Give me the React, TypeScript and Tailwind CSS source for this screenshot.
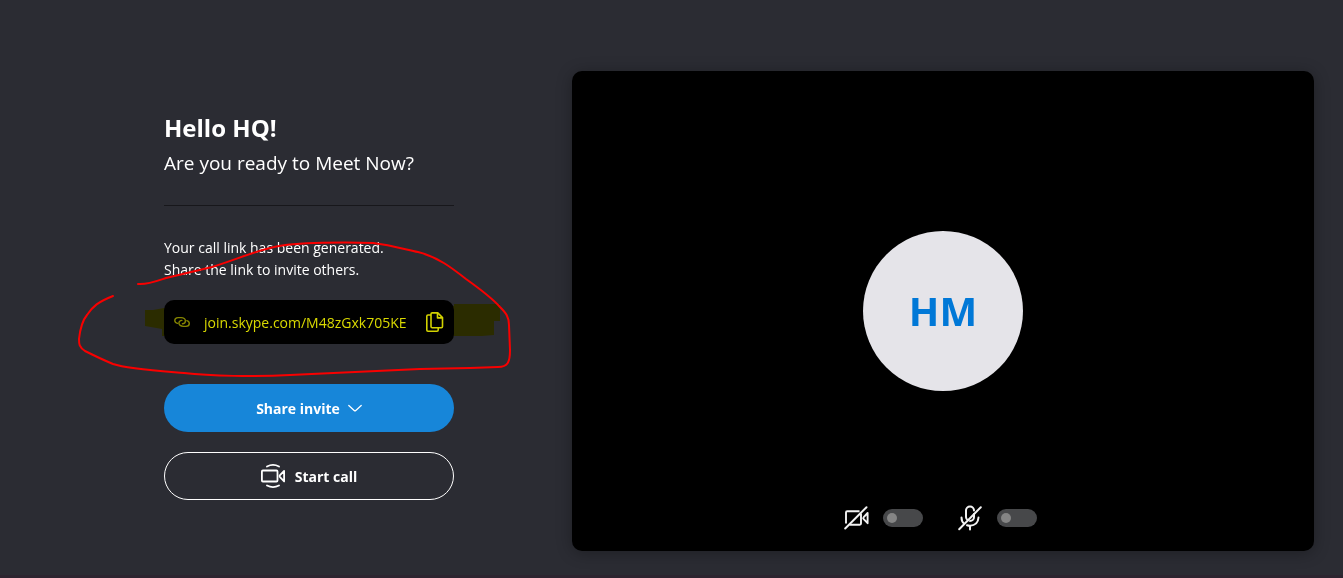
import React, { useState } from 'react';

const callLink = 'join.skype.com/M48zGxk705KE';

const LinkIcon = () => (
  <svg className="h-4 w-4" viewBox="0 0 16 16" fill="none" stroke="currentColor" strokeWidth="1.4" strokeLinecap="round">
    <path d="M3.600 9.400C1.800 9 .8 7.800.8 6.500c0-1.800 1.400-2.900 3.400-2.900h3c2.300 0 4.200 1.500 4.200 3.400 0 1.600-1.200 2.700-3 2.700" />
    <path d="M12.800 6.700c1.600.5 2.500 1.700 2.500 2.900 0 1.700-1.400 2.800-3.300 2.800H9.200c-2.400 0-4.300-1.500-4.300-3.300 0-1.600 1.200-2.700 3-2.700" />
  </svg>
);

const CopyIcon = () => (
  <svg className="h-5 w-[18px]" viewBox="0 0 18 20" fill="none" stroke="currentColor" strokeWidth="1.6" strokeLinejoin="round">
    <path d="M6.200.9h5.600l4.700 4.700v9q0 1.200-1.200 1.200H6.200Q5 15.800 5 14.600V2.100Q5 .9 6.200.9z" />
    <path d="M11.500.9v5h5" />
    <path d="M5 3H2Q.8 3 .8 4.200v13.800q0 1.200 1.200 1.200h9q1.200 0 1.200-1.200v-2.200" />
  </svg>
);

const ChevronIcon = () => (
  <svg className="h-2 w-[14px]" viewBox="0 0 14 8" fill="none" stroke="currentColor" strokeWidth="1.3" strokeLinecap="round">
    <path d="M.8 1.500l5.400 4.900q.8.700 1.600 0L13.200 1.500" />
  </svg>
);

const MeetIcon = () => (
  <svg className="h-6 w-6" viewBox="0 0 24 24" fill="none" stroke="currentColor" strokeWidth="1.800" strokeLinecap="round" strokeLinejoin="round">
    <rect x="0.9" y="6.500" width="15.600" height="11" rx="1" />
    <path d="M23.100 7v10.400L19 13.200q-.9-1 0-2z" />
    <path d="M6 2.500Q12 -.6 18 2.500" />
    <path d="M6 21.500Q12 24.600 18 21.500" />
  </svg>
);

const CameraOffIcon = () => (
  <svg className="h-7 w-7" viewBox="0 0 28 28" fill="none" stroke="currentColor" strokeWidth="1.900" strokeLinejoin="round">
    <path d="M17.500 7.200H5.200Q4 7.200 4 8.400v11.200" />
    <path d="M7.500 20.800h10.300q1.200 0 1.200-1.200V9.500" />
    <path d="M25.600 9v10.200L21.700 15.200q-1-1 0-2z" />
    <path d="M3.200 24.500l21.300-21.300" strokeWidth="2" strokeLinecap="round" />
  </svg>
);

const MicOffIcon = () => (
  <svg className="h-7 w-7" viewBox="0 0 28 28" fill="none" stroke="currentColor" strokeWidth="2" strokeLinecap="round">
    <path d="M18 6.500a4 4 0 0 0-8 0v6a4 4 0 0 0 2 3.800" />
    <path d="M18 10v3a4 4 0 0 1-4 4" />
    <path d="M5.500 13.500q0 4 2.500 6" />
    <path d="M11 21.200q1.500.5 3 .5 8-.5 8.500-8.200" />
    <path d="M14 22v3.500" />
    <path d="M3.200 25.200l21.600-22" strokeWidth="2" />
  </svg>
);

interface DeviceToggleProps {
  label: string;
  icon: React.ReactNode;
}

const DeviceToggle: React.FC<DeviceToggleProps> = ({ label, icon }) => {
  const [enabled, setEnabled] = useState(false);

  return (
    <label className="flex cursor-pointer items-center gap-[13px] text-[#f2f2f2]">
      {icon}
      <input
        type="checkbox"
        role="switch"
        aria-label={label}
        checked={enabled}
        onChange={e => setEnabled(e.target.checked)}
        className="flex h-[18px] w-10 cursor-pointer appearance-none items-center rounded-full bg-[#47484a] px-1 before:h-[10px] before:w-[10px] before:rounded-full before:bg-[#858585] before:content-[''] checked:justify-end checked:bg-[#1786d9] checked:before:bg-white"
      />
    </label>
  );
};

// Hand-drawn markup: highlighter under a red pen stroke
const Annotations = () => (
  <>
    <svg className="pointer-events-none absolute left-0 top-0 mix-blend-multiply" width="572" height="400" aria-hidden="true">
      <path
        d="M145 310h8l11-2 40-2h250v-2h46v17h-6l0 14-12 1H162v-7l-17-3z"
        fill="#ffff00"
      />
    </svg>
    <svg className="pointer-events-none absolute left-0 top-0" width="572" height="400" fill="none" aria-hidden="true">
      <path
        d="M138 284C147 285 157 281 166 278L212 267C235 260 255 251 274 247C295 242 350 242 373 243C390 245 404 249 418 252C438 257 452 268 466 279C480 289 492 298 500 307C506 313 509 317 509 325L510 350C510 362 508 367 498 367L470 368L420 369L290 375C255 377 210 376 184 373C160 371 128 369 113 364C101 359 91 354 85 351C79 347 79 344 79 339C80 330 82 321 87 315C93 306 98 302 113 296"
        stroke="#f90000"
        strokeWidth="2"
        strokeLinecap="round"
        strokeLinejoin="round"
      />
    </svg>
  </>
);

export default function App() {
  const copyLink = () => navigator.clipboard?.writeText(callLink);

  return (
    <main className="relative flex min-h-screen items-start border-b-[3px] border-[#2d2530] bg-[#2b2c33] pr-[29px] pt-[71px] font-['Open_Sans','Noto_Sans',sans-serif] text-white">
      {/* Invite */}
      <section className="w-[572px] shrink-0 pl-[164px] pr-[118px] pt-[41px]">
        <h1 className="whitespace-nowrap text-[24px] font-bold leading-8">Hello HQ!</h1>
        <p className="mt-[5px] whitespace-nowrap text-[19px] leading-7">Are you ready to Meet Now?</p>
        <hr className="mt-7 border-t border-[#17171b]" />
        <p className="mt-[31px] whitespace-nowrap text-[14px] leading-[22px]">
          Your call link has been generated.
          <br />
          Share the link to invite others.
        </p>

        <div className="mt-[19px] flex h-11 items-center rounded-[10px] bg-black px-[10px]">
          <span className="text-[#858585]">
            <LinkIcon />
          </span>
          <a href={`https://${callLink}`} className="ml-[14px] flex-1 whitespace-nowrap text-[14px] text-[#d9d9d9]">
            {callLink}
          </a>
          <button type="button" aria-label="Copy link" onClick={copyLink} className="cursor-pointer text-[#d2d2d2]">
            <CopyIcon />
          </button>
        </div>

        <button
          type="button"
          className="mt-10 flex h-12 w-full cursor-pointer items-center justify-center gap-2 rounded-full bg-[#1786d9] text-[14px] font-bold"
        >
          Share invite
          <ChevronIcon />
        </button>
        <button
          type="button"
          className="mt-5 flex h-12 w-full cursor-pointer items-center justify-center gap-[10px] rounded-full border border-white text-[14px] font-bold"
        >
          <MeetIcon />
          Start call
        </button>
      </section>

      {/* Video preview */}
      <section className="grid min-h-[480px] flex-1 grid-rows-[1fr_auto_1fr] justify-items-center rounded-[10px] bg-black shadow-[0_2px_16px_rgba(0,0,0,0.3)]">
        <div className="row-start-2 flex h-40 w-40 items-center justify-center rounded-full bg-[#e5e4e9] text-[40px] font-bold text-[#0078d7]">
          HM
        </div>
        <div className="row-start-3 flex items-end gap-[33px] pb-[19px] pr-[7px]">
          <DeviceToggle label="Camera" icon={<CameraOffIcon />} />
          <DeviceToggle label="Microphone" icon={<MicOffIcon />} />
        </div>
      </section>

      <Annotations />
    </main>
  );
}
